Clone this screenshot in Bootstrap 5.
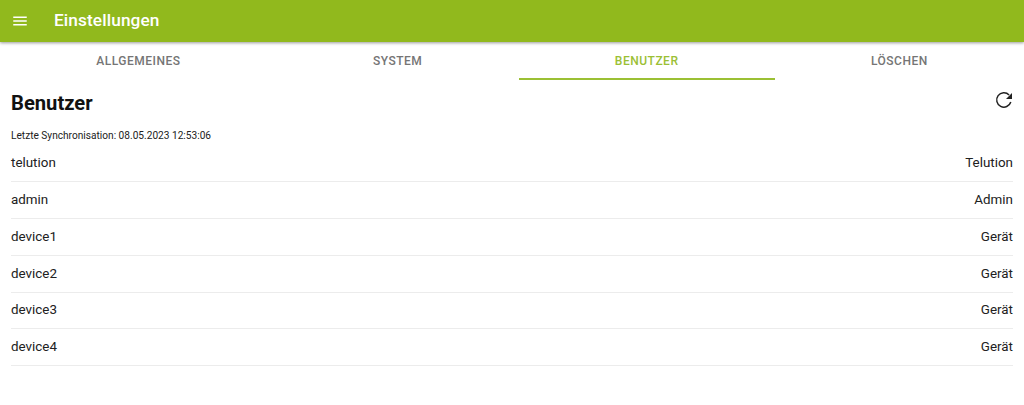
<!DOCTYPE html>
<html lang="de"><head><meta charset="utf-8"><title>Einstellungen</title>
<link href="https://cdn.jsdelivr.net/npm/bootstrap@5.3.0/dist/css/bootstrap.min.css" rel="stylesheet">
<style>
html,body{height:405px;overflow:hidden;background:#fff;font-family:Roboto,sans-serif;color:#212121}
.topbar{height:42px;background:#91b91d;box-shadow:0 1px 3px rgba(0,0,0,.4);color:#fff;position:relative;z-index:2}
.menu-btn{width:40px;line-height:0}
.top-title{font-size:17.25px;font-weight:500;letter-spacing:.1px;margin-left:14px}
.tabstrip{height:38px}
.tabitem{flex:1 1 auto;height:38px;font-size:12px;font-weight:500;letter-spacing:.5px;color:#757575;text-transform:uppercase;padding-bottom:1px}
.tabitem.on{color:#9bc034;box-shadow:inset 0 -2px 0 #9bc034}
.pane{padding:0 11px}
.head-row{height:47px;padding-top:11px}
.head-title{font-size:20.2px;font-weight:700;color:#111;line-height:24px;margin:0}
.sync-line{font-size:10.15px;color:#212121;line-height:14px;margin-top:2px;height:16px}
.user-row{height:36.9px;border-bottom:1px solid #ececec;font-size:13.4px;color:#212121}
.refresh-ic{margin-top:-3px;margin-right:-3px}
</style></head><body>
<header class="topbar d-flex align-items-center">
<div class="menu-btn d-flex justify-content-center"><svg width="18" height="18" viewBox="0 0 24 24" fill="#fff"><path d="M3 18h18v-2H3v2zm0-5h18v-2H3v2zm0-7v2h18V6H3z"/></svg></div>
<div class="top-title">Einstellungen</div>
</header>
<nav class="tabstrip d-flex px-0">
<div class="tabitem d-flex align-items-center justify-content-center">Allgemeines</div>
<div class="tabitem d-flex align-items-center justify-content-center">System</div>
<div class="tabitem on d-flex align-items-center justify-content-center">Benutzer</div>
<div class="tabitem d-flex align-items-center justify-content-center">Löschen</div>
</nav>
<main class="pane">
<div class="head-row d-flex justify-content-between align-items-start">
<h1 class="head-title">Benutzer</h1>
<svg width="24" height="24" viewBox="0 0 24 24" class="refresh-ic"><path d="M17.1 6.9A7.2 7.2 0 1 0 18.8 14" fill="none" stroke="#212121" stroke-width="1.5"/><path d="M14 11h6V5z" fill="#212121"/></svg>
</div>
<div class="sync-line">Letzte Synchronisation: 08.05.2023 12:53:06</div>
<div>
<div class="user-row d-flex justify-content-between align-items-center"><span>telution</span><span>Telution</span></div>
<div class="user-row d-flex justify-content-between align-items-center"><span>admin</span><span>Admin</span></div>
<div class="user-row d-flex justify-content-between align-items-center"><span>device1</span><span>Gerät</span></div>
<div class="user-row d-flex justify-content-between align-items-center"><span>device2</span><span>Gerät</span></div>
<div class="user-row d-flex justify-content-between align-items-center"><span>device3</span><span>Gerät</span></div>
<div class="user-row d-flex justify-content-between align-items-center"><span>device4</span><span>Gerät</span></div>
</div>
</main>
<script src="https://cdn.jsdelivr.net/npm/bootstrap@5.3.0/dist/js/bootstrap.bundle.min.js"></script>
</body></html>
